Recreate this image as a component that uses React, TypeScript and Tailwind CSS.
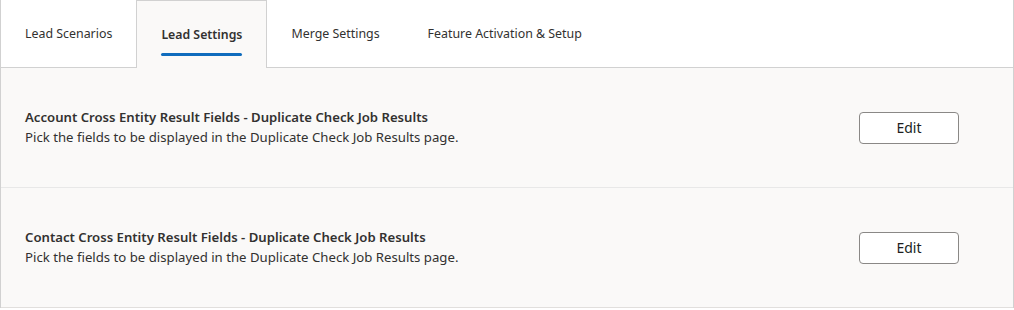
const TABS = ['Lead Scenarios', 'Lead Settings', 'Merge Settings', 'Feature Activation & Setup'];

const ROWS = [
  {
    title: 'Account Cross Entity Result Fields - Duplicate Check Job Results',
    desc: 'Pick the fields to be displayed in the Duplicate Check Job Results page.',
  },
  {
    title: 'Contact Cross Entity Result Fields - Duplicate Check Job Results',
    desc: 'Pick the fields to be displayed in the Duplicate Check Job Results page.',
  },
];

export default function App() {
  const active = 1;
  return (
    <div className="w-[1014px] h-[310px] bg-white text-[#323130] font-['Segoe_UI','Noto_Sans',sans-serif]">
      {/* tabs */}
      <div className="flex h-[68px] border-l border-r border-[#d1d1d1]">
        {TABS.map((t, i) =>
          i === active ? (
            <div
              key={t}
              className="relative flex items-center pt-[1px] px-[24px] bg-[#faf9f8] border-l border-r border-t border-[#d1d1d1]"
            >
              <span className="text-[12.3px] font-semibold text-[#323130]">{t}</span>
              <span className="absolute left-[24px] right-[24px] top-[52px] h-[3px] rounded-full bg-[#0f6cbd]" />
            </div>
          ) : (
            <div key={t} className="flex items-center pt-[1px] px-[24px] border-b border-[#d1d1d1]">
              <span className="text-[12.4px] text-[#323130]">{t}</span>
            </div>
          )
        )}
        <div className="flex-1 border-b border-[#d1d1d1]" />
      </div>

      {/* rows */}
      <div className="bg-[#faf9f8] border-l border-r border-[#d1d1d1]">
        {ROWS.map((r, i) => (
          <div
            key={i}
            className={`flex items-center justify-between pl-[24px] pr-[54px] h-[120px] border-b ${i === 0 ? 'border-[#e8e8e8]' : 'border-[#e1dfdd]'}`}
          >
            <div>
              <p className="text-[13.15px] font-semibold leading-[19px] text-[#323130]">{r.title}</p>
              <p className="text-[13.2px] leading-[20px] text-[#323130]">{r.desc}</p>
            </div>
            <button className="w-[100px] h-[32px] bg-white border border-[#8a8886] rounded-[4px] text-[14px] text-[#201f1e]">
              Edit
            </button>
          </div>
        ))}
      </div>
    </div>
  );
}
